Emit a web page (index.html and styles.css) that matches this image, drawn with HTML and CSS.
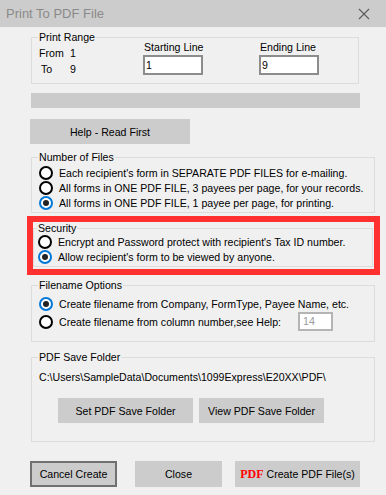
FILE: index.html
```html
<!DOCTYPE html>
<html>

<head>
    <meta charset="UTF-8">
    <title>Print To PDF File</title>
    <link rel="stylesheet" href="styles.css">
</head>

<body>
    <div class="window">
        <div class="titlebar">
            <span class="title">Print To PDF File</span>
            <svg class="close-x" width="12" height="12" viewBox="0 0 12 12">
                <path d="M1 1 L11 11 M11 1 L1 11" stroke="#5a5a5a" stroke-width="1.1" fill="none" />
            </svg>
        </div>

        <div class="content">
            <fieldset class="group range">
                <legend>Print Range</legend>
                <div class="range-row">
                    <div class="range-info">
                        <div><span class="lbl">From</span>1</div>
                        <div><span class="lbl to">To</span>9</div>
                    </div>
                    <div class="range-field start">
                        <div class="field-label">Starting Line</div>
                        <div class="textbox">1</div>
                    </div>
                    <div class="range-field">
                        <div class="field-label">Ending Line</div>
                        <div class="textbox">9</div>
                    </div>
                </div>
            </fieldset>

            <div class="progress"></div>

            <div class="btn help">Help - Read First</div>

            <fieldset class="group files">
                <legend>Number of Files</legend>
                <div class="option"><span class="radio"></span>Each recipient's form in SEPARATE PDF FILES for e-mailing.</div>
                <div class="option"><span class="radio"></span>All forms in ONE PDF FILE, 3 payees per page, for your records.</div>
                <div class="option"><span class="radio checked"></span>All forms in ONE PDF FILE, 1 payee per page, for printing.</div>
            </fieldset>

            <div class="highlight">
                <fieldset class="group security">
                    <legend>Security</legend>
                    <div class="option"><span class="radio"></span>Encrypt and Password protect with recipient's Tax ID number.</div>
                    <div class="option"><span class="radio checked"></span>Allow recipient's form to be viewed by anyone.</div>
                </fieldset>
            </div>

            <fieldset class="group names">
                <legend>Filename Options</legend>
                <div class="option first"><span class="radio checked"></span>Create filename from Company, FormType, Payee Name, etc.</div>
                <div class="option column">
                    <span class="radio"></span>Create filename from column number,see Help:
                    <div class="textbox small">14</div>
                </div>
            </fieldset>

            <fieldset class="group folder">
                <legend>PDF Save Folder</legend>
                <div class="path">C:\Users\SampleData\Documents\1099Express\E20XX\PDF\</div>
                <div class="folder-buttons">
                    <div class="btn set">Set PDF Save Folder</div>
                    <div class="btn view">View PDF Save Folder</div>
                </div>
            </fieldset>

            <div class="actions">
                <div class="btn cancel">Cancel Create</div>
                <div class="btn closebtn">Close</div>
                <div class="btn create"><span class="pdf">PDF</span> Create PDF File(s)</div>
            </div>
        </div>
    </div>
</body>

</html>
```

FILE: styles.css
```css
* {
    box-sizing: border-box;
}

body {
    margin: 0;
    background-color: #f0f0f0;
    font-family: "Liberation Sans", Arial, sans-serif;
    font-size: 10.6px;
    color: #000;
}

.window {
    width: 386px;
    height: 495px;
    overflow: hidden;
    white-space: nowrap;
}

.titlebar {
    height: 27px;
    background-color: #cccccc;
    display: flex;
    align-items: center;
    justify-content: space-between;
    padding: 0 16px 0 6px;
}

.title {
    font-size: 13px;
    color: #8a8a8a;
}

.content {
    padding-left: 31px;
}

/* group boxes */
.group {
    border: 1px solid #dcdcdc;
    margin: 0;
    padding: 0;
    min-width: 0;
}

.group legend {
    padding: 0 1px;
    margin-left: 6px;
    line-height: 12px;
}

.range {
    width: 328px;
    margin-top: 4px;
    padding-bottom: 6px;
}

.range-row {
    display: flex;
    padding-left: 7px;
}

.range-info {
    width: 104px;
    margin-top: 2px;
    line-height: 16px;
}

.lbl {
    display: inline-block;
    width: 31px;
}

.lbl.to {
    padding-left: 2px;
}

.range-field {
    margin-top: -2px;
}

.range-field.start {
    width: 116px;
}

.field-label {
    line-height: 12px;
    padding-left: 1px;
}

.textbox {
    margin-top: 2px;
    width: 60px;
    height: 20px;
    background-color: #fff;
    border: 2px solid #8c8c8c;
    line-height: 16px;
    padding-left: 1px;
}

.progress {
    width: 329px;
    height: 15px;
    margin-top: 9px;
    background-color: #cbcbcb;
}

.btn {
    background-color: #cccccc;
    display: flex;
    align-items: center;
    justify-content: center;
}

.help {
    width: 160px;
    height: 25px;
    margin: 11px 0 0 -1px;
}

.option {
    display: flex;
    align-items: center;
    height: 15px;
    padding-left: 7px;
}

.radio {
    width: 14px;
    height: 14px;
    border: 2px solid #000;
    border-radius: 50%;
    background-color: #fff;
    margin-right: 6px;
    flex: none;
    display: flex;
    align-items: center;
    justify-content: center;
}

.radio.checked {
    border-color: #0078d7;
}

.radio.checked::after {
    content: "";
    width: 6px;
    height: 6px;
    border-radius: 50%;
    background-color: #222;
}

.files {
    width: 344px;
    margin-top: 7px;
    padding-top: 2px;
    padding-bottom: 2px;
}

.highlight {
    width: 353px;
    margin: 3px 0 0 -4px;
    border: 6px solid #ff3030;
    padding-bottom: 2px;
}

.security {
    width: 340px;
    padding-bottom: 2px;
}

.security legend {
    margin-left: 3px;
}

.security .option {
    padding-left: 4px;
}

.names {
    width: 344px;
    margin-top: 4px;
    padding-bottom: 10px;
}

.names .option.first {
    margin-top: 5px;
}

.names .option.column {
    margin-top: 1px;
    height: 19px;
}

.textbox.small {
    margin: 0 0 0 17px;
    width: 35px;
    height: 19px;
    border-color: #b4b4b4;
    color: #9a9a9a;
    line-height: 15px;
    padding-left: 3px;
}

.folder {
    width: 344px;
    margin-top: 9px;
    padding-bottom: 18px;
}

.path {
    margin-top: 8px;
    padding-left: 7px;
    line-height: 13px;
}

.folder-buttons {
    display: flex;
    margin-top: 14px;
    padding-left: 26px;
    gap: 6px;
}

.folder-buttons .btn {
    height: 25px;
}

.set {
    width: 135px;
}

.view {
    width: 125px;
}

.actions {
    display: flex;
    margin: 19px 0 0 -1px;
}

.actions .btn {
    height: 26px;
}

.cancel {
    width: 87px;
    border: 2px solid #707070;
}

.closebtn {
    width: 87px;
    margin-left: 18px;
}

.create {
    width: 125px;
    margin-left: 13px;
}

.pdf {
    font-family: "Liberation Serif", serif;
    font-weight: bold;
    font-size: 12px;
    color: #ff0000;
    margin-right: 3px;
}
```
